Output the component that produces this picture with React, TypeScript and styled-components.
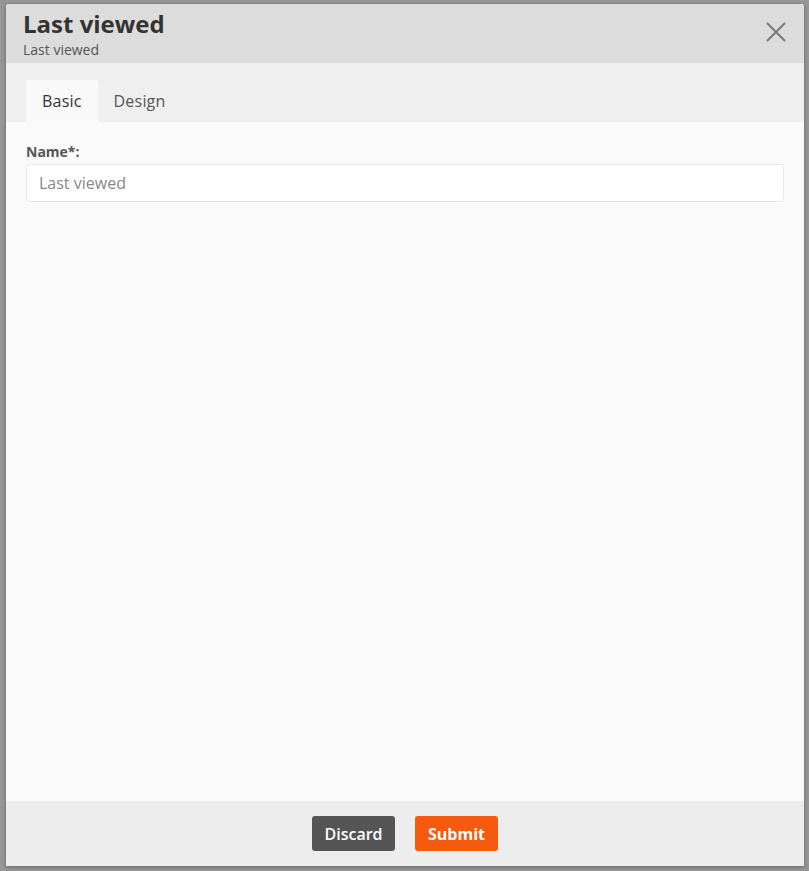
import React, { useState } from "react";
import styled, { createGlobalStyle } from "styled-components";

const Global = createGlobalStyle`
  html, body {
    margin: 0;
    padding: 0;
    font-family: "Open Sans", "Liberation Sans", sans-serif;
  }
  * { box-sizing: border-box; }
`;

const Backdrop = styled.div`
  width: 809px;
  height: 871px;
  background: #979797;
  padding: 4px 5px 5px 6px;
  display: flex;
`;

const Modal = styled.div`
  flex: 1;
  display: flex;
  flex-direction: column;
  background: #fafafa;
  border-radius: 3px 3px 0 0;
  box-shadow: 0 1px 4px rgba(0, 0, 0, 0.35);
  overflow: hidden;
`;

const Header = styled.header`
  height: 59px;
  flex: none;
  background: #dcdcdc;
  padding: 4px 17px 0 17px;
  display: flex;
  justify-content: space-between;
  align-items: flex-start;
`;

const Titles = styled.div`
  display: flex;
  flex-direction: column;
`;

const Title = styled.h1`
  margin: 0;
  font-size: 24px;
  line-height: 32px;
  font-weight: 700;
  color: #333;
`;

const Subtitle = styled.div`
  font-size: 14px;
  line-height: 18px;
  margin-top: 1px;
  color: #555;
`;

const Close = styled.button`
  border: 0;
  background: none;
  padding: 0;
  margin: 14px 1px 0 0;
  width: 20px;
  height: 20px;
  cursor: pointer;
  svg { display: block; }
`;

const TabBar = styled.nav`
  height: 59px;
  flex: none;
  background: #efefef;
  padding: 17px 20px 0;
  display: flex;
  align-items: flex-end;
`;

const Tab = styled.div<{ $active?: boolean }>`
  height: 42px;
  padding: 0 16px;
  display: flex;
  align-items: center;
  font-size: 16px;
  letter-spacing: 0.2px;
  color: ${(p) => (p.$active ? "#333" : "#555")};
  background: ${(p) => (p.$active ? "#f9f9f9" : "transparent")};
  border-radius: 3px 3px 0 0;
  cursor: default;
`;

const Body = styled.section`
  flex: 1;
  padding: 20px 20px;
`;

const Label = styled.label`
  display: block;
  font-size: 14px;
  line-height: 19px;
  font-weight: 700;
  color: #555;
  margin-bottom: 3px;
`;

const Input = styled.input`
  width: 100%;
  height: 38px;
  border: 1px solid #e6e6e6;
  border-radius: 4px;
  background: #fff;
  padding: 0 12px;
  font-family: inherit;
  font-size: 16px;
  color: #333;
  outline: none;
  &::placeholder { color: #888; }
`;

const Footer = styled.footer`
  height: 65px;
  flex: none;
  background: #ededed;
  display: flex;
  justify-content: center;
  align-items: center;
  gap: 20px;
`;

const Button = styled.button<{ $primary?: boolean }>`
  width: 83px;
  height: 35px;
  border: 0;
  border-radius: 3px;
  font-family: inherit;
  font-size: 16px;
  font-weight: ${(p) => (p.$primary ? 700 : 600)};
  color: #fff;
  background: ${(p) => (p.$primary ? "#f55a0f" : "#555555")};
  cursor: pointer;
`;

export default function App() {
  const [tab, setTab] = useState("Basic");
  const [name, setName] = useState("");

  return (
    <>
      <Global />
      <Backdrop>
        <Modal>
          <Header>
            <Titles>
              <Title>Last viewed</Title>
              <Subtitle>Last viewed</Subtitle>
            </Titles>
            <Close aria-label="Close">
              <svg width="20" height="20" viewBox="0 0 20 20">
                <path d="M1 1 L19 19 M19 1 L1 19" stroke="#777" strokeWidth="2" fill="none" />
              </svg>
            </Close>
          </Header>
          <TabBar>
            {["Basic", "Design"].map((t) => (
              <Tab key={t} $active={tab === t} onClick={() => setTab(t)}>
                {t}
              </Tab>
            ))}
          </TabBar>
          <Body>
            <Label>Name*:</Label>
            <Input placeholder="Last viewed" value={name} onChange={(e) => setName(e.target.value)} />
          </Body>
          <Footer>
            <Button>Discard</Button>
            <Button $primary>Submit</Button>
          </Footer>
        </Modal>
      </Backdrop>
    </>
  );
}
